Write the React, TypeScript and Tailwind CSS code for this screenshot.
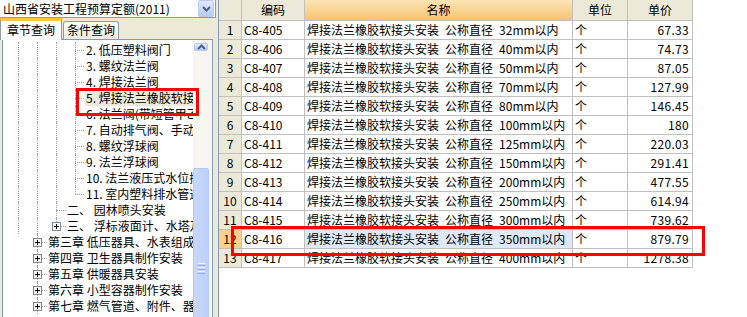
import React from "react";

type TreeRow = {
  level: 1 | 2 | 3;
  text: string;
  plus?: boolean;
  last?: boolean;
  selected?: boolean;
};

const treeRows: TreeRow[] = [
  { level: 3, text: "2. 低压塑料阀门" },
  { level: 3, text: "3. 螺纹法兰阀" },
  { level: 3, text: "4. 焊接法兰阀" },
  { level: 3, text: "5. 焊接法兰橡胶软接头安装", selected: true },
  { level: 3, text: "6. 法兰阀(带短管甲乙)安装" },
  { level: 3, text: "7. 自动排气阀、手动放风阀" },
  { level: 3, text: "8. 螺纹浮球阀" },
  { level: 3, text: "9. 法兰浮球阀" },
  { level: 3, text: "10. 法兰液压式水位控制阀" },
  { level: 3, text: "11. 室内塑料排水管道消声器", last: true },
  { level: 2, text: "二、 园林喷头安装" },
  { level: 2, text: "三、 浮标液面计、水塔及水池浮漂水位标尺", plus: true, last: true },
  { level: 1, text: "第三章 低压器具、水表组成与安装", plus: true },
  { level: 1, text: "第四章 卫生器具制作安装", plus: true },
  { level: 1, text: "第五章 供暖器具安装", plus: true },
  { level: 1, text: "第六章 小型容器制作安装", plus: true },
  { level: 1, text: "第七章 燃气管道、附件、器具安装", plus: true },
];

// x positions are relative to the tree content box
const vLeft: Record<number, string> = {
  0: "left-[15px]",
  1: "left-[34px]",
  2: "left-[53px]",
  3: "left-[72px]",
};
const hLine: Record<number, string> = {
  1: "left-[34px] w-[10px]",
  2: "left-[53px] w-[10px]",
  3: "left-[72px] w-[9px]",
};
const plusLeft: Record<number, string> = {
  1: "left-[30px]",
  2: "left-[49px]",
  3: "left-[68px]",
};
const textPad: Record<number, string> = {
  1: "pl-[44px]",
  2: "pl-[63px]",
  3: "pl-[82px]",
};

const ancestors: Record<number, number[]> = {
  1: [],
  2: [0, 1],
  3: [0, 1, 2],
};

type Item = { no: number; code: string; size: string; price: string };

const items: Item[] = [
  { no: 1, code: "C8-405", size: "32", price: "67.33" },
  { no: 2, code: "C8-406", size: "40", price: "74.73" },
  { no: 3, code: "C8-407", size: "50", price: "87.05" },
  { no: 4, code: "C8-408", size: "70", price: "127.99" },
  { no: 5, code: "C8-409", size: "80", price: "146.45" },
  { no: 6, code: "C8-410", size: "100", price: "180" },
  { no: 7, code: "C8-411", size: "125", price: "220.03" },
  { no: 8, code: "C8-412", size: "150", price: "291.41" },
  { no: 9, code: "C8-413", size: "200", price: "477.55" },
  { no: 10, code: "C8-414", size: "250", price: "614.94" },
  { no: 11, code: "C8-415", size: "300", price: "739.62" },
  { no: 12, code: "C8-416", size: "350", price: "879.79" },
  { no: 13, code: "C8-417", size: "400", price: "1278.38" },
];

function PlusBox() {
  return (
    <svg width="9" height="9" viewBox="0 0 9 9">
      <rect x="0.5" y="0.5" width="8" height="8" fill="#f4f4f4" stroke="#7a8a99" />
      <path d="M2 4.5 H7 M4.5 2 V7" stroke="#000" strokeWidth="1" />
    </svg>
  );
}

function TreeLine({ row }: { row: TreeRow }) {
  return (
    <div className="relative h-[16px] whitespace-nowrap">
      {/* connector lines */}
      {ancestors[row.level].map((a) => (
        <div
          key={a}
          className={`absolute top-0 h-[16px] border-l border-dotted border-[#a0a0a0] ${vLeft[a]}`}
        />
      ))}
      <div
        className={`absolute top-0 border-l border-dotted border-[#a0a0a0] ${vLeft[row.level]} ${
          row.last ? "h-[8px]" : "h-[16px]"
        }`}
      />
      <div className={`absolute top-[8px] border-t border-dotted border-[#a0a0a0] ${hLine[row.level]}`} />
      {row.plus && (
        <div className={`absolute top-[4px] flex ${plusLeft[row.level]}`}>
          <PlusBox />
        </div>
      )}
      <div className={`${textPad[row.level]} text-[12px] leading-[16px] text-black`}>
        <span className={row.selected ? "bg-[#ece9d8] px-[1px]" : "px-[1px]"}>{row.text}</span>
      </div>
    </div>
  );
}

export default function App() {
  const cell = "border-r border-b border-[#c0c0c0] text-[12px] leading-[18px] whitespace-nowrap overflow-hidden";

  return (
    <div className="relative flex h-[317px] w-[747px] overflow-hidden bg-white font-['Noto_Sans_CJK_SC','DejaVu_Sans',sans-serif] text-black">
      {/* left panel */}
      <div className="flex w-[218px] shrink-0 flex-col bg-[#ece9d8]">
        {/* combo */}
        <div className="flex h-[20px] w-[216px] items-center border-b border-r border-[#7f9db9] bg-white">
          <span className="flex-1 whitespace-nowrap pl-[3px] text-[12px] leading-[16px]">
            山西省安装工程预算定额(2011)
          </span>
          <div className="mr-[1px] flex h-[17px] w-[16px] items-center justify-center rounded-[2px] border border-[#b9c9ef] bg-[linear-gradient(to_bottom,#e3eafd,#b7cbf7)]">
            <svg width="9" height="6" viewBox="0 0 9 6">
              <path d="M1 1 L4.5 4.5 L8 1" stroke="#4d6185" strokeWidth="2" fill="none" />
            </svg>
          </div>
        </div>

        {/* tabs */}
        <div className="flex h-[22px] items-end">
          <div className="relative z-10 -mb-px h-[22px] w-[62px] border-x border-t-[3px] border-[#919b9c] border-t-[#ffc83c] bg-[#fcfcfe] pt-[1px] text-center text-[12px] leading-[15px]">
            章节查询
          </div>
          <div className="ml-px h-[18px] w-[56px] rounded-t-[3px] border border-b-0 border-[#919b9c] bg-[linear-gradient(to_bottom,#ffffff,#ecebe5)] text-center text-[12px] leading-[16px]">
            条件查询
          </div>
        </div>

        {/* tree box */}
        <div className="ml-[2px] flex h-[290px] w-[211px] shrink-0 overflow-hidden border border-[#7f9db9] bg-white">
          <div className="flex-1 overflow-hidden pt-[2px]">
            {treeRows.map((r, i) => (
              <TreeLine key={i} row={r} />
            ))}
          </div>
          {/* scrollbar */}
          <div className="flex w-[19px] shrink-0 flex-col bg-[#f7f6f0]">
            <div className="ml-[1px] mt-[3px] flex h-[14px] w-[14px] items-center justify-center rounded-[2px] border border-[#b9c9ef] bg-[linear-gradient(to_bottom,#e3eafd,#b7cbf7)]">
              <svg width="9" height="6" viewBox="0 0 9 6">
                <path d="M1 5 L4.5 1.5 L8 5" stroke="#4d6185" strokeWidth="2" fill="none" />
              </svg>
            </div>
            <div className="h-[117px] shrink-0" />
            <div className="flex h-[200px] w-[16px] shrink-0 items-center justify-center rounded-[2px] border border-[#b4c8f6] bg-[linear-gradient(to_right,#c9d8fc,#bcd0fa)]">
              <div className="flex flex-col gap-[1px]">
                <div className="h-px w-[7px] bg-[#eef3fe]" />
                <div className="h-px w-[7px] bg-[#8faaee]" />
                <div className="h-px w-[7px] bg-[#eef3fe]" />
                <div className="h-px w-[7px] bg-[#8faaee]" />
                <div className="h-px w-[7px] bg-[#eef3fe]" />
                <div className="h-px w-[7px] bg-[#8faaee]" />
              </div>
            </div>
          </div>
        </div>
      </div>

      {/* table */}
      <div className="flex-1 border-l border-[#7f9db9] bg-white">
        <div className="grid grid-cols-[23px_63px_268px_55px_65px]">
          <div className="h-[21px] border-r border-b border-[#c0c0c0] bg-[#ece9d8]" />
          <div className={`${cell} h-[21px] bg-[#ece9d8] text-center leading-[20px]`}>编码</div>
          <div className={`${cell} h-[21px] bg-[linear-gradient(to_bottom,#fde4b6,#f6c46e)] text-center leading-[20px]`}>名称</div>
          <div className={`${cell} h-[21px] bg-[#ece9d8] text-center leading-[20px]`}>单位</div>
          <div className={`${cell} h-[21px] bg-[#ece9d8] text-center leading-[20px]`}>单价</div>

          {items.map((it) => {
            const sel = it.no === 12;
            return (
              <React.Fragment key={it.no}>
                <div className={`${cell} h-[19px] text-center ${sel ? "bg-[#fdd08f]" : "bg-[#ece9d8]"}`}>{it.no}</div>
                <div className={`${cell} h-[19px] px-[2px]`}>{it.code}</div>
                <div className={`${cell} h-[19px] px-[2px] ${sel ? "bg-[#dfe8f5]" : ""}`}>
                  焊接法兰橡胶软接头安装{"\u2002"}公称直径{"\u2002"}{it.size}mm以内
                </div>
                <div className={`${cell} h-[19px] px-[2px]`}>个</div>
                <div className={`${cell} h-[19px] px-[3px] text-right tracking-[0.3px]`}>{it.price}</div>
              </React.Fragment>
            );
          })}
        </div>
      </div>

      {/* red highlight boxes */}
      <div className="absolute left-[76px] top-[88px] h-[28px] w-[123px] border-[3px] border-[#ff0000]" />
      <div className="absolute left-[231px] top-[226px] h-[30px] w-[474px] border-[3px] border-[#ff0000]" />
    </div>
  );
}
